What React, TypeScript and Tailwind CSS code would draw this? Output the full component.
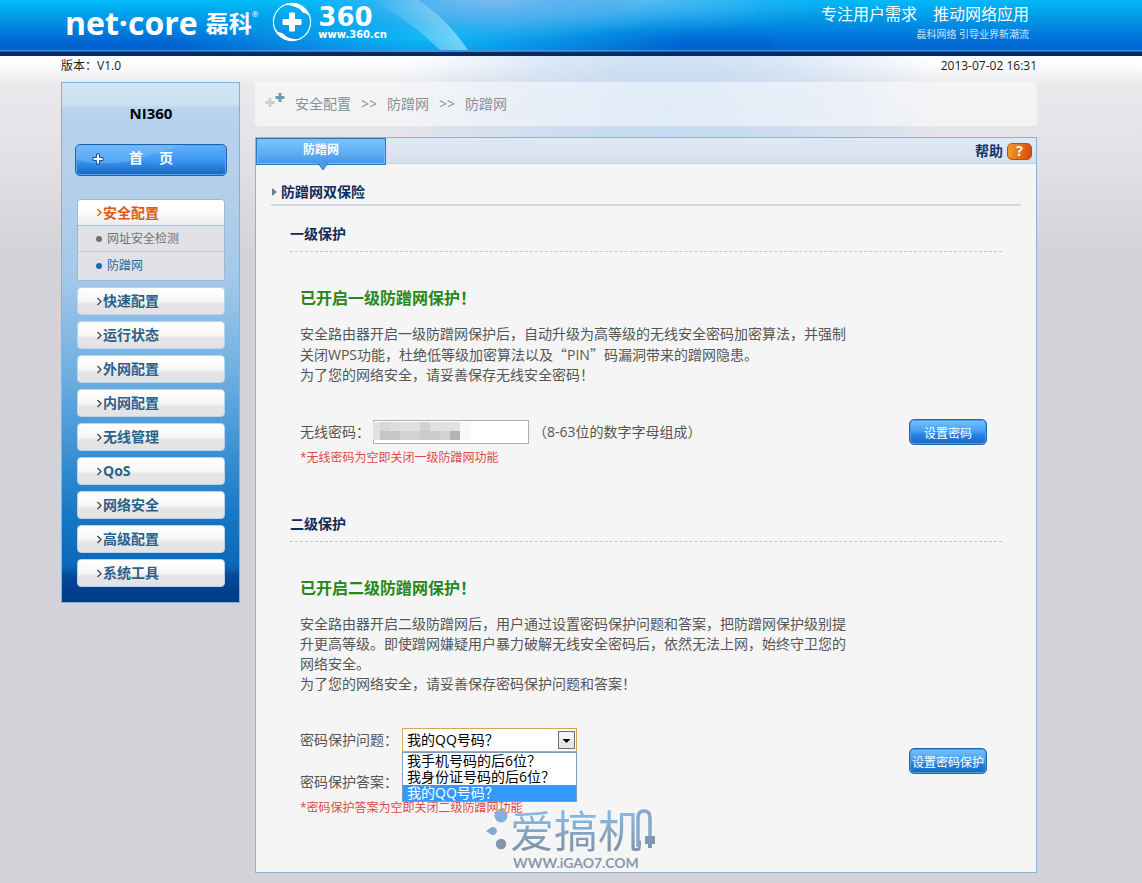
import React, { useState } from 'react';

const MENU = ['快速配置', '运行状态', '外网配置', '内网配置', '无线管理', 'QoS', '网络安全', '高级配置', '系统工具'];

const QUESTIONS = ['我手机号码的后6位？', '我身份证号码的后6位？', '我的QQ号码？'];

const Chevron: React.FC<{ className?: string }> = ({ className }) => (
  <svg width="7" height="9" viewBox="0 0 7 9" className={className} fill="none" stroke="currentColor" strokeWidth="1.3">
    <path d="M1.5 1 5 4.5 1.5 8" />
  </svg>
);

// full-width quotation mark, the latin face would draw it narrow
const Quote: React.FC<{ children: React.ReactNode }> = ({ children }) => (
  <span className="font-['Noto_Sans_CJK_SC',sans-serif]">{children}</span>
);

const Header = () => (
  <header className="relative bg-[linear-gradient(180deg,#00bdfa_0%,#0098e6_35%,#0062d2_85%,#0060cf_100%)] border-b-4 border-[#022c66]">
    <svg className="absolute inset-0 h-full w-full" viewBox="0 0 1142 52" preserveAspectRatio="none" aria-hidden="true">
      <defs>
        <radialGradient id="glow" cx="0.5" cy="0.5" r="0.5">
          <stop offset="0" stopColor="#10c0fa" stopOpacity="0.95" />
          <stop offset="1" stopColor="#10b8f5" stopOpacity="0" />
        </radialGradient>
        <radialGradient id="haze" cx="0.5" cy="0.5" r="0.5">
          <stop offset="0" stopColor="#84bdf0" stopOpacity="1" />
          <stop offset="0.5" stopColor="#5fb0ee" stopOpacity="0.7" />
          <stop offset="1" stopColor="#3aa8ee" stopOpacity="0" />
        </radialGradient>
        <linearGradient id="beam" x1="0" x2="1" y1="0" y2="0">
          <stop offset="0" stopColor="#a8e6fb" stopOpacity="0" />
          <stop offset="1" stopColor="#b4ebfc" stopOpacity="0.65" />
        </linearGradient>
      </defs>
      <ellipse cx="430" cy="36" rx="260" ry="60" fill="url(#glow)" />
      <ellipse cx="500" cy="0" rx="190" ry="42" fill="url(#haze)" />
      <ellipse cx="650" cy="0" rx="190" ry="34" fill="url(#haze)" fillOpacity="0.6" />
      <path d="M370 0 L418 0 Q446 18 468 50 L440 50 Q410 20 370 0 Z" fill="url(#beam)" />
      <path d="M750 0 Q764 20 774 50 L1142 50 L1142 0 Z" fill="#0a9cf0" fillOpacity="0.12" />
      <rect x="0" y="50" width="1142" height="1" fill="#3f93de" />
    </svg>
    <div className="relative flex h-[52px] items-start justify-between pl-[65px] pr-[113px] text-white">
      <div className="flex items-start">
        <span className="text-[32px] font-bold leading-[46px]">net·core</span>
        <span className="ml-2 text-[23px] font-bold leading-[46px]">磊科</span>
        <span className="mt-2 text-[8px] leading-3">®</span>
        <svg width="40" height="40" viewBox="0 0 40 40" className="ml-3.5 mt-0.5" fill="none" aria-hidden="true">
          <circle cx="20" cy="20" r="18.6" stroke="#fff" strokeWidth="1.2" />
          <path d="M12 2.8 C22 -1.500 34 3.500 38 14 C35 13 34 11 30.500 10.500 C29 6.500 21 3 12 2.800 Z" fill="#fff" />
          <path d="M2 24 C5 36 16 41.500 27 37.500 C21 37 17 36.500 13 33.500 C11 30.500 7 30.500 5.500 29.500 C4 28 3.500 26 2 24 Z" fill="#fff" />
          <path d="M17.500 11 h5 v6.500 h6.500 v5 h-6.500 v6.500 h-5 v-6.500 h-6.500 v-5 h6.500 Z" fill="#fff" stroke="#fff" strokeLinejoin="round" />
        </svg>
        <div className="ml-1.5 mt-1 font-['DejaVu_Sans',sans-serif]">
          <div className="text-[26px] font-bold leading-[26px]">360</div>
          <div className="text-[10px] font-bold leading-[10px]">www.360.cn</div>
        </div>
      </div>
      <div className="pt-1 text-right">
        <p className="space-x-4 text-base leading-5">
          <span>专注用户需求</span>
          <span>推动网络应用</span>
        </p>
        <p className="text-[10px] leading-5 text-[#c5e6fb]">磊科网络 引导业界新潮流</p>
      </div>
    </div>
  </header>
);

const Sidebar = () => (
  <aside className="w-[179px] shrink-0 self-start border border-[#7db3e0] bg-[linear-gradient(180deg,#cfe6f6_0%,#cbe2f4_4%,#b8d3ec_5%,#b3cfea_22%,#a2c8ea_38%,#6fafe0_56%,#3f93d6_70%,#1576c4_84%,#0a69b9_93%,#05489a_95%,#003b86_100%)] pb-[15px] pl-[13px] pr-3 pt-5">
    <h1 className="text-center text-[15px] font-bold leading-5 text-black">NI360</h1>
    <button
      type="button"
      className="relative mt-[21px] flex h-8 w-full items-center overflow-hidden rounded-[5px] border border-[#1c64ad] bg-[linear-gradient(180deg,#63b0f7_0%,#3f9cf5_45%,#2b85e2_70%,#1b62b4_100%)] pb-1 text-sm font-bold text-white shadow-[inset_0_0_0_1px_#58a7ee]"
    >
      <svg className="absolute inset-0 h-full w-full" viewBox="0 0 152 32" preserveAspectRatio="none" aria-hidden="true">
        <path d="M0 16 Q35 24 62 15 T110 0 L0 0 Z" fill="#8cc8fb" fillOpacity="0.35" />
      </svg>
      <svg width="12" height="12" viewBox="0 0 12 12" className="relative ml-4 mt-0.5" aria-hidden="true">
        <path d="M4.5 1 h3 v3.5 H11 v3 H7.500 V11 h-3 V7.500 H1 v-3 h3.500 Z" fill="#fff" stroke="#1f4f8c" />
      </svg>
      <span className="relative ml-[25px]">首</span>
      <span className="relative ml-4">页</span>
    </button>
    <nav className="mx-0.5 mt-[23px] flex flex-col gap-1.5">
      <div className="overflow-hidden rounded-t border border-[#a3b8cc] bg-[#e1e2e5]">
        <a href="#security" className="flex h-[26px] items-center border-b border-[#a9bfd3] bg-[linear-gradient(180deg,#fff_30%,#ececee_100%)] pl-[18px] text-sm font-bold text-[#dd5b11]">
          <Chevron />
          安全配置
        </a>
        <a href="#url-check" className="flex h-[26px] items-center border-b border-[#c6c7cb] pl-[18px] text-xs text-[#737373]">
          <span className="mr-[5px] size-1.5 rounded-full bg-[#707070]" />
          网址安全检测
        </a>
        <a href="#anti-leech" className="flex h-7 items-center pl-[18px] text-xs text-[#2068a8]">
          <span className="mr-[5px] size-1.5 rounded-full bg-[#1f6aac]" />
          防蹭网
        </a>
      </div>
      {MENU.map(item => (
        <a
          key={item}
          href={`#${item}`}
          className="flex h-7 items-center rounded border border-[#b9d3ea] bg-[linear-gradient(180deg,#fff_0%,#f8f8f9_50%,#e5e5e7_62%,#e3e3e6_100%)] pl-[18px] text-sm font-bold text-[#2b6189]"
        >
          <Chevron className="text-[#3c4a52]" />
          {item}
        </a>
      ))}
    </nav>
  </aside>
);

const ActionButton: React.FC<{ children: React.ReactNode }> = ({ children }) => (
  <button
    type="button"
    className="mr-[15px] h-[26px] w-[78px] shrink-0 whitespace-nowrap rounded-[5px] border border-[#2067ae] bg-[linear-gradient(180deg,#7cbffa_0%,#4da5f5_40%,#2380e0_65%,#1b66bb_100%)] pt-1 text-center text-xs text-white shadow-[inset_0_0_0_1px_#4b9ae6]"
  >
    {children}
  </button>
);

const Section: React.FC<{ title: string; status: string; lines: React.ReactNode[]; children: React.ReactNode }> = ({
  title,
  status,
  lines,
  children
}) => (
  <section className="mx-[19px]">
    <h3 className="border-b border-dashed border-[#c4c4c4] pb-[7px] text-sm font-bold leading-5 text-[#0d2b5c]">{title}</h3>
    <div className="pl-2.5 text-sm leading-5 text-[#555]">
      <p className="mt-[34px] text-base font-bold leading-6 text-[#26871a]">{status}</p>
      <p className="mb-[34px] mt-3.5">
        {lines.map((line, i) => (
          <span key={i} className="block">{line}</span>
        ))}
      </p>
      {children}
    </div>
  </section>
);

const Watermark = () => (
  <div className="pointer-events-none absolute bottom-0 left-[230px] text-[#86a9cb]" aria-hidden="true">
    <div className="flex items-start">
      <svg width="24" height="46" viewBox="0 0 24 46">
        <circle cx="15" cy="8" r="6.500" fill="#86b0d6" />
        <path d="M0 23 L5 19.500 A4 4 0 1 1 5 26.500 Z" fill="#8ba9c6" />
        <circle cx="15" cy="36" r="5.200" fill="#8294a8" />
      </svg>
      <span className="bg-[linear-gradient(180deg,#86b7de_20%,#8194ab_85%)] bg-clip-text text-[44px] font-normal leading-[46px] text-transparent">爱搞机</span>
      <svg width="22" height="46" viewBox="0 0 22 46" className="-ml-1.5" fill="none">
        <path d="M2 39 V10 Q2 3 8 3 Q14 3 14 10 V30" stroke="#86a9cb" strokeWidth="3.500" />
        <path d="M9 28 h10 v8 h-3 v4 h-4 v-4 h-3 Z" fill="#8297b0" />
      </svg>
    </div>
    <div className="pl-[27px] font-['Lato','Open_Sans',sans-serif] text-sm font-bold leading-[18px] text-[#8b98a8]">WWW.iGAO7.COM</div>
  </div>
);

export default function App() {
  const [question, setQuestion] = useState(QUESTIONS[2]);

  return (
    <div
      lang="zh-CN"
      className="min-h-screen bg-[#d3d2d8] font-['Open_Sans','Noto_Sans_CJK_SC',sans-serif] text-sm text-[#555]"
    >
      <Header />
      <div className="bg-[radial-gradient(ellipse_280px_130px_at_670px_50px,#c0d7ee_0%,#c8dbf2b0_50%,transparent_100%),linear-gradient(180deg,#fff_0px,#fcfcfd_10px,#eaeaed_30px,#e1e0e5_110px,#d3d2d8_200px)] pb-[11px] pl-[61px] pr-[105px]">
        <div className="flex justify-between pb-1.5 text-xs leading-5 text-[#1a1a1a]">
          <span>版本：V1.0</span>
          <time dateTime="2013-07-02T16:31">2013-07-02 16:31</time>
        </div>

        <div className="flex gap-[15px]">
          <Sidebar />

          <main className="min-w-0 flex-1">
            <nav className="mb-[11px] flex items-center rounded bg-white/50 py-3 pl-2.5 leading-5 text-[#8a8f96]">
              <svg width="20" height="14" viewBox="0 0 20 14" className="-mt-2 mr-2.5" aria-hidden="true">
                <path d="M3.500 5 h3 v3 h3 v3 h-3 v3 h-3 v-3 h-3 v-3 h3 Z" fill="#c9ced3" />
                <path d="M13.500 0 h3 v3 h3 v3 h-3 v3 h-3 v-3 h-3 v-3 h3 Z" fill="#6d9cb4" />
              </svg>
              <a href="#security">安全配置</a>
              <span className="mx-2.5">&gt;&gt;</span>
              <a href="#anti-leech">防蹭网</a>
              <span className="mx-2.5">&gt;&gt;</span>
              <span>防蹭网</span>
            </nav>

            <div className="relative border border-[#8fb3cf] bg-[#f5f5f5] pb-[54px]">
              <div className="flex h-[26px] items-start justify-between border-b border-[#c9d3dc] bg-[linear-gradient(180deg,#dfe9f4_0%,#dce6f0_50%,#d5dfe9_100%)]">
                <button
                  type="button"
                  className="relative h-[27px] w-[130px] border border-[#2c7cb4] bg-[linear-gradient(180deg,#7cc3fb_0%,#5cabf2_60%,#4595e2_100%)] pb-1 text-xs font-bold text-white shadow-[inset_0_0_0_1px_#74bdf7]"
                >
                  防蹭网
                  <svg width="12" height="8" viewBox="0 0 12 8" className="absolute left-[60px] top-full -mt-px" aria-hidden="true">
                    <path d="M1 0 L6 7 L11 0" fill="#4c9de8" stroke="#2c7cb4" />
                  </svg>
                </button>
                <a href="#help" className="flex h-[26px] items-center gap-1 pr-1 font-bold text-[#12356e]">
                  帮助
                  <span className="flex h-[17px] w-[25px] items-center justify-center rounded-[5px] border border-[#b5501a] bg-[linear-gradient(100deg,#f0a030_0%,#e8731a_45%,#d64a0c_100%)] text-sm text-white">?</span>
                </a>
              </div>

              <div className="px-[15px] pt-[18px]">
                <h2 className="mb-[18px] flex items-center border-b-2 border-[#cfd6dd] pb-0.5 text-sm font-bold leading-5 text-[#0d2b5c]">
                  <svg width="10" height="8" viewBox="0 0 10 8" aria-hidden="true">
                    <path d="M1 0 L6 4 L1 8 Z" fill="#6d7f92" />
                  </svg>
                  防蹭网双保险
                </h2>

                <Section
                  title="一级保护"
                  status="已开启一级防蹭网保护！"
                  lines={[
                    '安全路由器开启一级防蹭网保护后，自动升级为高等级的无线安全密码加密算法，并强制',
                    <>关闭WPS功能，杜绝低等级加密算法以及<Quote>“</Quote>PIN<Quote>”</Quote>码漏洞带来的蹭网隐患。</>,
                    '为了您的网络安全，请妥善保存无线安全密码！'
                  ]}
                >
                  <div className="flex items-center justify-between">
                    <div className="flex items-center">
                      <label htmlFor="wifi-password" className="mr-[3px]">无线密码：</label>
                      <div className="relative">
                        <input id="wifi-password" type="text" className="block h-6 w-[156px] border border-[#abadb3] bg-white px-1 outline-none" />
                        <svg width="97" height="18" viewBox="0 0 97 18" className="pointer-events-none absolute left-0 top-0.5" shapeRendering="crispEdges" aria-hidden="true">
                          <rect width="97" height="18" fill="#f8f8f8" />
                          <rect width="87" height="18" fill="#e0e1e1" />
                          <rect x="7" width="10" height="9" fill="#d8d8d8" />
                          <rect x="17" width="10" height="9" fill="#dedede" />
                          <rect x="47" width="10" height="9" fill="#d2d2d2" />
                          <rect x="7" y="9" width="20" height="9" fill="#c6c6c6" />
                          <rect x="27" y="9" width="20" height="9" fill="#d3d3d3" />
                          <rect x="47" y="9" width="20" height="9" fill="#cbcbcb" />
                          <rect x="67" y="9" width="10" height="9" fill="#d3d3d3" />
                          <rect x="77" y="9" width="10" height="9" fill="#b3b3b3" />
                        </svg>
                      </div>
                      <span className="ml-1">（8-63位的数字字母组成）</span>
                    </div>
                    <ActionButton>设置密码</ActionButton>
                  </div>
                  <p className="mb-[46px] mt-[3px] text-xs leading-5 text-[#dc4a4a]">*无线密码为空即关闭一级防蹭网功能</p>
                </Section>

                <Section
                  title="二级保护"
                  status="已开启二级防蹭网保护！"
                  lines={[
                    '安全路由器开启二级防蹭网后，用户通过设置密码保护问题和答案，把防蹭网保护级别提',
                    '升更高等级。即使蹭网嫌疑用户暴力破解无线安全密码后，依然无法上网，始终守卫您的',
                    '网络安全。',
                    '为了您的网络安全，请妥善保存密码保护问题和答案！'
                  ]}
                >
                  <div className="flex items-center justify-between">
                    <div className="flex flex-col gap-[18px]">
                      <div className="flex items-center">
                        <label htmlFor="question" className="mr-1">密码保护问题：</label>
                        <div className="relative z-10 w-[175px] text-black">
                          <select
                            id="question"
                            value={question}
                            onChange={e => setQuestion(e.target.value)}
                            className="block h-6 w-full appearance-none border border-[#d3a650] bg-white px-1 leading-5 outline-none"
                          >
                            {QUESTIONS.map(q => (
                              <option key={q}>{q}</option>
                            ))}
                          </select>
                          <svg width="17" height="18" viewBox="0 0 17 18" className="pointer-events-none absolute right-0.5 top-[3px]" aria-hidden="true">
                            <rect x="0.500" y="0.500" width="16" height="17" fill="#e6e6e6" stroke="#6f6f6f" />
                            <rect x="1.500" y="1.500" width="14" height="7" fill="#f4f4f4" />
                            <path d="M4.500 8 h8 l-4 4 Z" fill="#000" />
                          </svg>
                          <ul className="absolute left-0 top-full w-full border border-[#7f9db9] bg-white leading-4">
                            {QUESTIONS.map(q => (
                              <li key={q} onClick={() => setQuestion(q)} className={q === question ? 'bg-[#3399ff] pl-1 text-white' : 'pl-1'}>
                                {q}
                              </li>
                            ))}
                          </ul>
                        </div>
                      </div>
                      <div className="flex items-center">
                        <label htmlFor="answer" className="mr-1">密码保护答案：</label>
                        <input id="answer" type="text" className="block h-6 w-[175px] border border-[#abadb3] bg-white px-1 outline-none" />
                      </div>
                    </div>
                    <ActionButton>设置密码保护</ActionButton>
                  </div>
                  <p className="mt-1 text-xs leading-5 text-[#dc4a4a]">*密码保护答案为空即关闭二级防蹭网功能</p>
                </Section>
              </div>
              <Watermark />
            </div>
          </main>
        </div>
      </div>
    </div>
  );
}
